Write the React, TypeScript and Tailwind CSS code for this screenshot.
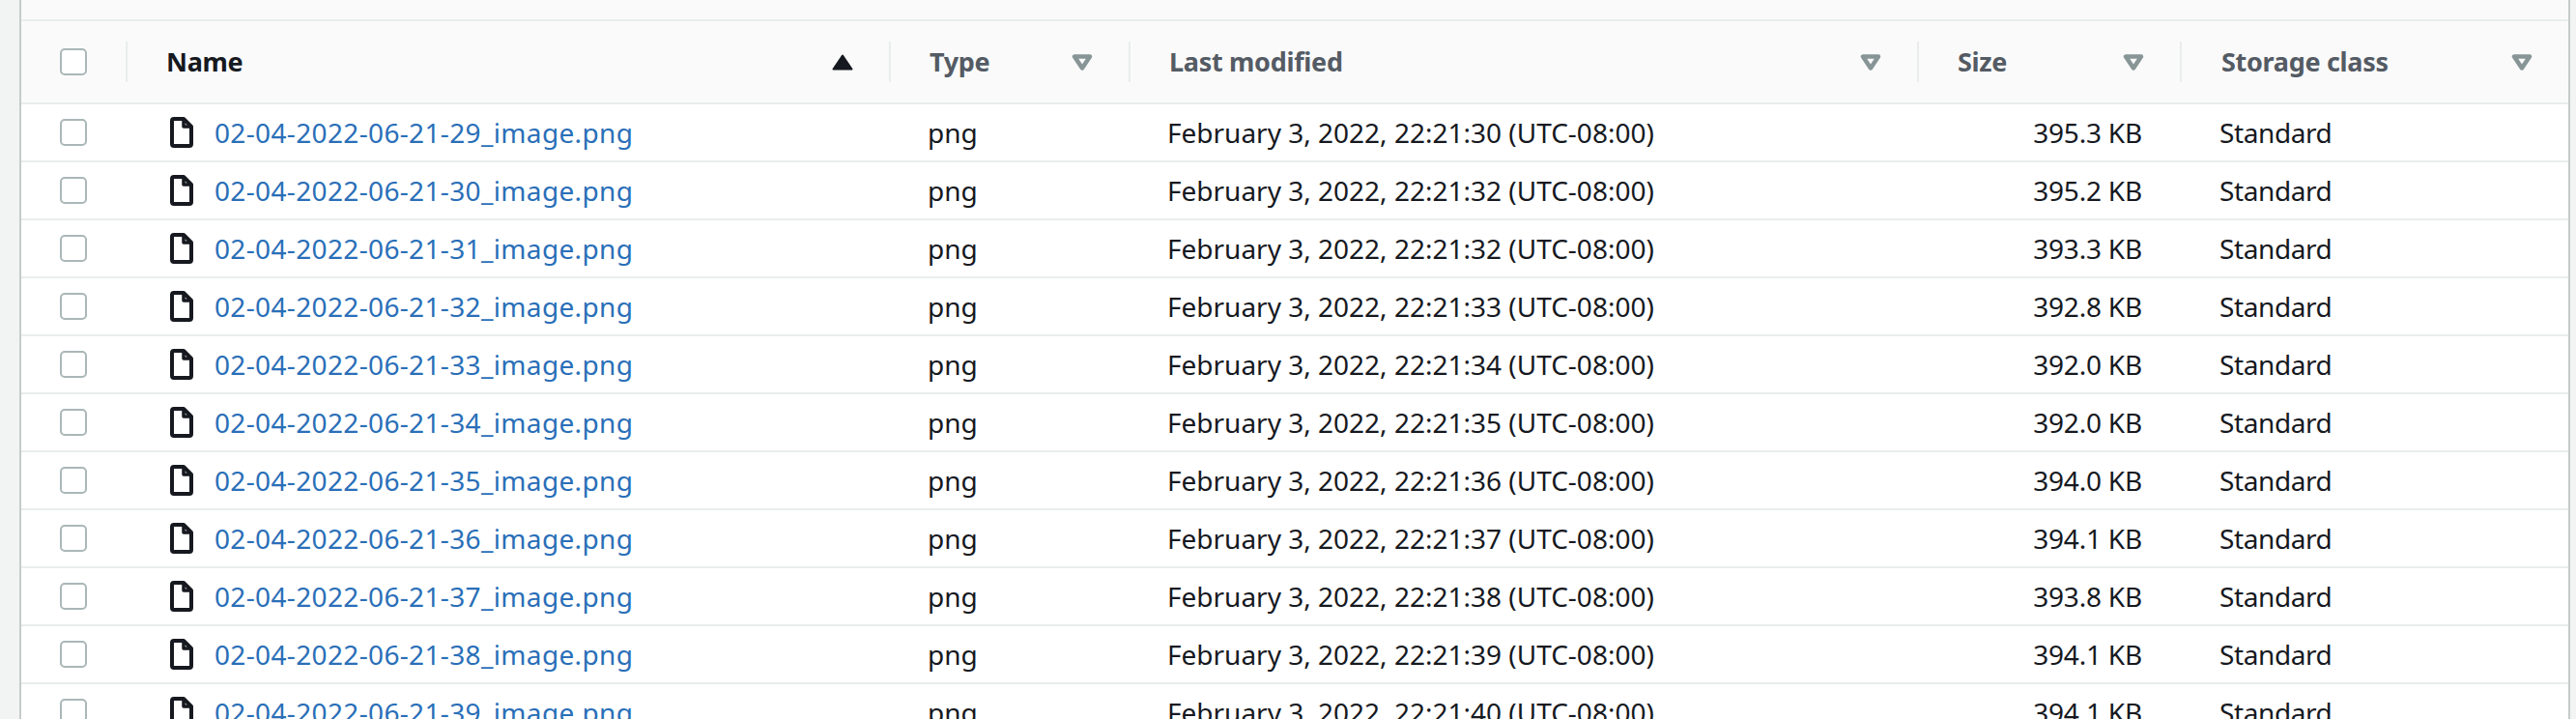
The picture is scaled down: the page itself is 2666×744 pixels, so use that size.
const rows = [
  ["29", "30", "395.3 KB"],
  ["30", "32", "395.2 KB"],
  ["31", "32", "393.3 KB"],
  ["32", "33", "392.8 KB"],
  ["33", "34", "392.0 KB"],
  ["34", "35", "392.0 KB"],
  ["35", "36", "394.0 KB"],
  ["36", "37", "394.1 KB"],
  ["37", "38", "393.8 KB"],
  ["38", "39", "394.1 KB"],
  ["39", "40", "394.1 KB"],
];

const gridCols = "grid grid-cols-[110px_790px_248px_816px_272px_400px]";

function Checkbox() {
  return <div className="h-[28px] w-[28px] rounded-[5px] border-2 border-[#aab7b8] bg-white" />;
}

function FilterIcon() {
  return (
    <svg width="22" height="17" viewBox="0 0 22 17" className="shrink-0">
      <path d="M3 2.5h16L11 14.5z" fill="none" stroke="#879596" strokeWidth="4.5" strokeLinejoin="round" />
    </svg>
  );
}

function SortIcon() {
  return (
    <svg width="22" height="17" viewBox="0 0 22 17" className="shrink-0">
      <path d="M11 1.5 20.5 15.5H1.5z" fill="#16191f" stroke="#16191f" strokeWidth="2" strokeLinejoin="round" />
    </svg>
  );
}

function FileIcon() {
  return (
    <svg width="24" height="32" viewBox="0 0 24 32" className="shrink-0">
      <path d="M4 2h10l8 8v18a2 2 0 0 1-2 2H4a2 2 0 0 1-2-2V4a2 2 0 0 1 2-2z" fill="none" stroke="#16191f" strokeWidth="4" strokeLinejoin="round" />
      <path d="M14 2v8h8" fill="none" stroke="#16191f" strokeWidth="3.5" strokeLinejoin="round" />
    </svg>
  );
}

function HeaderCell({ label, active, last }: { label: string; active?: boolean; last?: boolean }) {
  return (
    <div className={`flex h-[42px] items-center justify-between pr-[37px] ${last ? "pl-[41px]" : "border-r-2 border-[#eaeded] pl-[40px]"}`}>
      <span className={`text-[27px] font-bold tracking-[-0.3px] ${active ? "text-[#16191f]" : "text-[#545b64]"}`}>{label}</span>
      {active ? <SortIcon /> : <FilterIcon />}
    </div>
  );
}

export default function App() {
  return (
    <div className="h-[744px] w-[2666px] overflow-hidden bg-[#f2f3f3] font-['Noto_Sans',sans-serif] text-[28px] text-[#16191f]">
      <div className="ml-[20px] mr-[6px] border-x-2 border-[#c6cbcb] bg-white">
        <div className="box-content h-[20px] border-b-2 border-[#eaeded] bg-[#fafafa]" />
        <div className={`${gridCols} box-content h-[84px] items-center border-b-2 border-[#eaeded] bg-[#fafafa]`}>
          <div className="flex h-[42px] items-center border-r-2 border-[#eaeded] pl-[40px]">
            <Checkbox />
          </div>
          <HeaderCell label="Name" active />
          <HeaderCell label="Type" />
          <HeaderCell label="Last modified" />
          <HeaderCell label="Size" />
          <HeaderCell label="Storage class" last />
        </div>
        {rows.map(([name, sec, size]) => (
          <div key={name} className={`${gridCols} h-[60px] items-center border-b-2 border-[#eaeded]`}>
            <div className="pl-[40px]">
              <Checkbox />
            </div>
            <div className="flex items-center gap-[22px] pl-[44px]">
              <FileIcon />
              <a className="tracking-[0.35px] text-[#2a6fb8]">{`02-04-2022-06-21-${name}_image.png`}</a>
            </div>
            <div className="pl-[38px]">png</div>
            <div className="pl-[38px]">{`February 3, 2022, 22:21:${sec} (UTC-08:00)`}</div>
            <div className="pr-[41px] text-right tracking-[-0.2px]">{size}</div>
            <div className="pl-[39px] tracking-[-0.4px]">Standard</div>
          </div>
        ))}
      </div>
    </div>
  );
}
